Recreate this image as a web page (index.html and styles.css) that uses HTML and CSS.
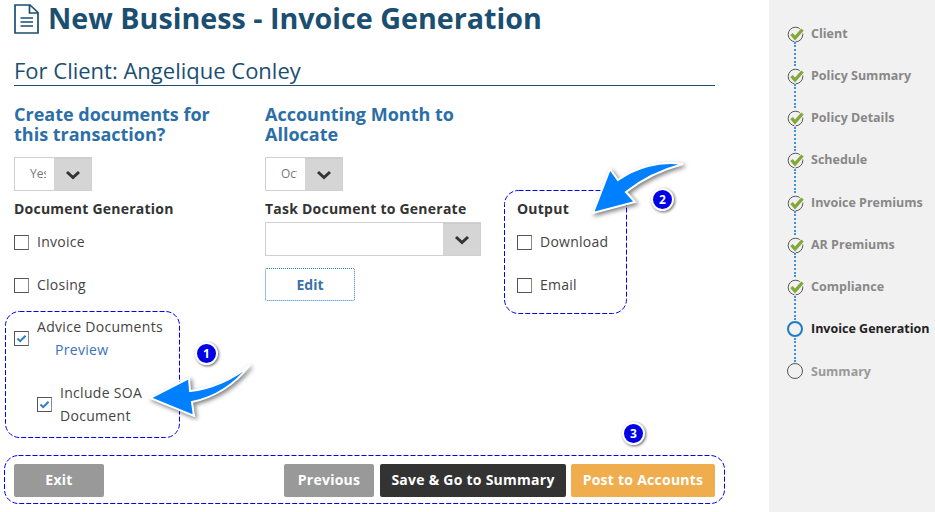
FILE: index.html
```html
<!DOCTYPE html>
<html lang="en">
<head>
<meta charset="utf-8">
<title>New Business - Invoice Generation</title>
<link rel="stylesheet" href="styles.css">
</head>
<body>
<div class="page">
  <main class="main">
    <h1 class="title">
      <svg class="doc-icon" width="25" height="30" viewBox="0 0 25 30" fill="none" stroke="#1b4f72" stroke-width="1.7"><path d="M1 1H16L24 8.5V29H1Z"/><path d="M15.5 1V9H24"/><path d="M6.5 14H19M6.5 18H19M6.5 22H19" stroke-width="1.6"/></svg>
      New Business - Invoice Generation
    </h1>
    <h2 class="client">For Client: Angelique Conley</h2>

    <div class="columns">
      <section class="col col-a">
        <h3 class="question">Create documents for this transaction?</h3>
        <div class="select small"><span class="select-value">Yes</span><span class="select-btn"><svg width="16" height="10" viewBox="0 0 16 10"><path d="M2 2L8 7.5L14 2" fill="none" stroke="#333" stroke-width="3"/></svg></span></div>
        <div class="label">Document Generation</div>
        <label class="check"><span class="box"></span>Invoice</label>
        <label class="check"><span class="box"></span>Closing</label>
        <div class="advice">
          <span class="box checked"><svg width="11" height="9" viewBox="0 0 12 10"><path d="M1.5 5L4.5 8L10.5 2" fill="none" stroke="#2a80c0" stroke-width="2.2"/></svg></span>
          <div class="advice-text">
            <div>Advice Documents</div>
            <a class="preview">Preview</a>
          </div>
        </div>
        <div class="soa">
          <span class="box checked"><svg width="11" height="9" viewBox="0 0 12 10"><path d="M1.5 5L4.5 8L10.5 2" fill="none" stroke="#2a80c0" stroke-width="2.2"/></svg></span>
          <div class="soa-text">Include SOA Document</div>
        </div>
      </section>

      <section class="col col-b">
        <h3 class="question">Accounting Month to Allocate</h3>
        <div class="select small"><span class="select-value">Oct</span><span class="select-btn"><svg width="16" height="10" viewBox="0 0 16 10"><path d="M2 2L8 7.5L14 2" fill="none" stroke="#333" stroke-width="3"/></svg></span></div>
        <div class="label">Task Document to Generate</div>
        <div class="select wide"><span class="select-value"></span><span class="select-btn"><svg width="16" height="10" viewBox="0 0 16 10"><path d="M2 2L8 7.5L14 2" fill="none" stroke="#333" stroke-width="3"/></svg></span></div>
        <button class="edit" type="button">Edit</button>
      </section>

      <section class="col col-c">
        <div class="label">Output</div>
        <label class="check"><span class="box"></span>Download</label>
        <label class="check"><span class="box"></span>Email</label>
      </section>
    </div>

    <footer class="actions">
      <button class="btn grey exit" type="button">Exit</button>
      <button class="btn grey prev" type="button">Previous</button>
      <button class="btn dark" type="button">Save &amp; Go to Summary</button>
      <button class="btn orange" type="button">Post to Accounts</button>
    </footer>

    <svg class="callout callout-advice" width="175" height="127"><rect x=".5" y=".5" width="174" height="126" rx="14"/></svg>
    <svg class="callout callout-output" width="123" height="124"><rect x=".5" y=".5" width="122" height="123" rx="14"/></svg>
    <svg class="callout callout-actions" width="721" height="49"><rect x=".5" y=".5" width="720" height="48" rx="14"/></svg>
    <span class="badge badge-1">1</span>
    <span class="badge badge-2">2</span>
    <span class="badge badge-3">3</span>

    <svg class="arrow arrow-1" width="125" height="72" viewBox="0 0 125 72">
      <path class="arrow-shape" d="M102 4C88 22 68 36 44 41L46 55L2 37L41 17L42 30C62 28 86 18 102 4Z"/>
    </svg>
    <svg class="arrow arrow-2" width="110" height="72" viewBox="0 0 110 72">
      <path class="arrow-shape" d="M94 4C70 0 46 8 29 20L21 9L4 53L46 42L37 32C52 20 72 10 94 4Z"/>
    </svg>
  </main>

  <aside class="steps">
    <ol class="step-list">
      <li class="step done"><svg class="tick" width="18" height="18" viewBox="0 0 18 18"><use href="#done"/></svg>Client</li>
      <li class="step done"><svg class="tick" width="18" height="18" viewBox="0 0 18 18"><use href="#done"/></svg>Policy Summary</li>
      <li class="step done"><svg class="tick" width="18" height="18" viewBox="0 0 18 18"><use href="#done"/></svg>Policy Details</li>
      <li class="step done"><svg class="tick" width="18" height="18" viewBox="0 0 18 18"><use href="#done"/></svg>Schedule</li>
      <li class="step done"><svg class="tick" width="18" height="18" viewBox="0 0 18 18"><use href="#done"/></svg>Invoice Premiums</li>
      <li class="step done"><svg class="tick" width="18" height="18" viewBox="0 0 18 18"><use href="#done"/></svg>AR Premiums</li>
      <li class="step done"><svg class="tick" width="18" height="18" viewBox="0 0 18 18"><use href="#done"/></svg>Compliance</li>
      <li class="step current"><span class="ring"></span>Invoice Generation</li>
      <li class="step todo"><span class="ring"></span>Summary</li>
    </ol>
    <svg width="0" height="0" class="defs"><defs>
      <g id="done"><circle cx="8.5" cy="9.5" r="7.3" fill="none" stroke="#555" stroke-width="1"/><path d="M4.5 9L8 13L15.5 4.5" fill="none" stroke="#f1f1f1" stroke-width="5.5"/><path d="M4.5 9L8 13L15.5 4.5" fill="none" stroke="#83a83a" stroke-width="3.4"/></g>
    </defs></svg>
  </aside>
</div>
</body>
</html>
```
FILE: styles.css
```css
* { box-sizing: border-box; }
html, body { margin: 0; padding: 0; height: 100%; }
body { font-family: "Open Sans", sans-serif; color: #333; background: #fff; overflow: hidden; }
.page { display: flex; width: 935px; height: 512px; }
.main { position: relative; width: 769px; padding: 0 54px 0 14px; }
.title { display: flex; align-items: center; gap: 9px; margin: 0; height: 36px; font-size: 28.7px; line-height: 36px; font-weight: 700; color: #1b4f72; white-space: nowrap; }
.doc-icon { flex: none; margin-top: 2px; }
.client { margin: 20px 0 0; height: 30px; font-size: 22px; line-height: 29px; font-weight: 400; color: #1b4f72; border-bottom: 1px solid #1b4f72; white-space: nowrap; }
.columns { display: flex; margin-top: 18px; }
.col-a { width: 251px; }
.col-b { width: 252px; }
.col-c { padding-top: 87px; }
.question { margin: 0 0 12px; width: 210px; height: 41px; font-size: 18px; line-height: 20px; font-weight: 700; color: #2c6ea6; }
.select { display: flex; height: 34px; border: 1px solid #d0d0d0; background: #fff; }
.select.small { width: 78px; }
.select.wide { width: 216px; }
.select-value { flex: 1; min-width: 0; overflow: hidden; margin-right: 8px; padding-left: 15px; font-size: 12px; line-height: 32px; color: #777; white-space: nowrap; }
.select-btn { display: flex; align-items: center; justify-content: center; width: 37px; flex: none; background: #d5d5d5; border-top: 1px solid #ccc; }
.label { margin-top: 8px; height: 20px; font-size: 14px; line-height: 20px; font-weight: 700; color: #333; letter-spacing: .23px; }
.check { display: flex; align-items: center; gap: 8px; height: 20px; margin-top: 23px; font-size: 14px; line-height: 20px; letter-spacing: .25px; color: #444; }
.label + .check { margin-top: 13px; }
.box { display: flex; align-items: center; justify-content: center; flex: none; width: 15px; height: 15px; border: 1px solid #555; border-right-color: #888; background: #fff; }
.advice { display: flex; gap: 8px; margin-top: 20px; font-size: 14px; line-height: 23px; letter-spacing: .3px; color: #444; }
.advice .box { margin-top: 16px; }
.advice-text { white-space: nowrap; }
.preview { display: block; padding-left: 18px; color: #3a72b8; }
.soa { display: flex; align-items: center; gap: 8px; width: 142px; margin: 20px 0 0 23px; font-size: 14px; line-height: 23px; letter-spacing: .3px; color: #444; }
.soa-text { width: 100px; }
.col-b .select.wide { margin-top: 3px; }
.edit { display: block; width: 90px; height: 33px; margin-top: 12px; padding: 0; border: 1px dotted #2a80c0; border-radius: 2px; background: #fff; font: 700 14px "Open Sans", sans-serif; color: #3a72a8; }
.actions { position: absolute; left: 14px; right: 54px; top: 464px; display: flex; gap: 6px; }
.btn { height: 33px; padding: 0 0 2px; border: 0; border-radius: 2px; font: 700 14px "Open Sans", sans-serif; letter-spacing: .25px; color: #fff; white-space: nowrap; }
.grey { background: #999; width: 90px; }
.exit { margin-right: auto; }
.dark { background: #333; width: 186px; }
.orange { background: #f0ad4e; width: 144px; margin-left: -1px; }
.callout { position: absolute; pointer-events: none; fill: none; stroke: #0000ff; stroke-width: 1; stroke-dasharray: 5 2; }
.callout-advice { left: 5px; top: 311px; }
.callout-output { left: 504px; top: 190px; }
.callout-actions { left: 4px; top: 455px; }
.badge { position: absolute; width: 23px; height: 23px; border: 2px solid #fff; border-radius: 50%; background: #0000e6; box-shadow: 1px 1px 3px rgba(0,0,0,.6); color: #fff; font-size: 12px; font-weight: 700; line-height: 19px; text-align: center; }
.badge-1 { left: 195px; top: 342px; }
.badge-2 { left: 651px; top: 188px; }
.badge-3 { left: 622px; top: 422px; }
.arrow { position: absolute; overflow: visible; }
.arrow-shape { fill: #0080ff; stroke: #fff; stroke-width: 2; filter: drop-shadow(2px 2px 2px rgba(0,0,0,.5)); }
.arrow-1 { left: 148px; top: 361px; }
.arrow-2 { left: 589px; top: 160px; }
.steps { width: 166px; background: #f1f1f1; padding: 12px 0 0 18px; }
.step-list { position: relative; display: flex; flex-direction: column; margin: 0; padding: 0; list-style: none; }
.step { position: relative; display: flex; align-items: center; gap: 6px; height: 42.25px; font-size: 12.5px; font-weight: 700; color: #888; white-space: nowrap; }
.step:not(:last-child)::after { content: ""; position: absolute; left: 7px; top: 30px; height: 24px; border-left: 2px dotted #3a94d8; }
.tick { flex: none; margin-top: 1px; }
.ring { flex: none; width: 16px; height: 16px; margin-right: 2px; border: 1px solid #555; border-radius: 50%; background: #f1f1f1; }
.current { color: #222; }
.current .ring { border: 2px solid #1e7cc4; }
.todo { color: #999; }
.defs { position: absolute; }
```
